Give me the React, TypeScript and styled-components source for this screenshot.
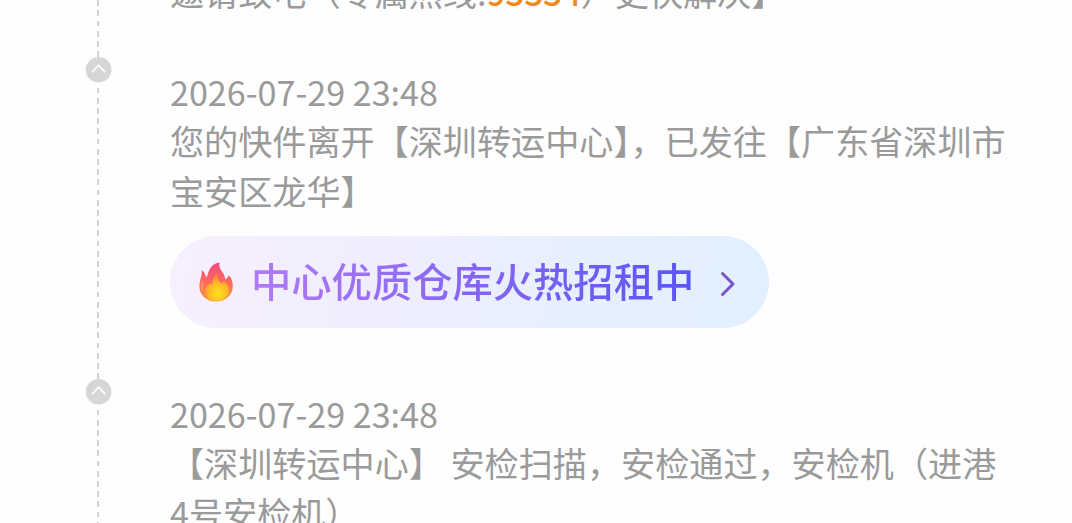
import { ReactNode } from 'react';
import styled, { createGlobalStyle } from 'styled-components';

const GlobalStyle = createGlobalStyle`
    body {
        margin: 0;
        background-color: #fefefe;
    }
`;

const Page = styled.main`
    height: 523px;
    overflow: hidden;
    font-family: "Noto Sans CJK SC", sans-serif;
    font-size: 34.12px;
    color: #9a9a9a;
`;

const Timeline = styled.ol`
    margin: -265px 0 0;
    padding: 0 60px 0 85px;
    list-style: none;
`;

type ItemProps = {
    $alignEnd?: boolean;
};

const Item = styled.li<ItemProps>`
    display: flex;
    gap: 58px;
    height: 322px;

    > :last-child {
        align-self: ${({ $alignEnd }) => $alignEnd ? "flex-end" : "flex-start"};
    }
`;

const Rail = styled.div`
    flex: none;
    width: 27px;
    background: repeating-linear-gradient(to top, #d2d2d2 0 5.7px, transparent 5.7px 10.2px) 12px 100% / 2px 292px no-repeat;
`;

const Marker = styled.svg`
    display: block;
    width: 27px;
    height: 27px;
`;

const Body = styled.div`
    flex: 1;
    min-width: 0;
    padding: 10px 0 41px;
`;

const Time = styled.div`
    height: 48px;
    line-height: 49px;
`;

const Message = styled.p`
    margin: 0;
    line-height: 50px;
`;

const Hotline = styled.span`
    color: #f08a1d;
    font-weight: 500;
    letter-spacing: -0.6px;
`;

const Banner = styled.a`
    display: flex;
    align-items: center;
    box-sizing: border-box;
    width: 599px;
    height: 92px;
    margin-top: 21px;
    padding: 0 33px 0 28px;
    border-radius: 46px;
    background: linear-gradient(100deg, #f8effe 0%, #eeeefe 40%, #e6f0fe 70%, #e1effe 100%);
`;

const Fire = styled.svg`
    width: 36px;
    height: 40px;
`;

const BannerText = styled.span`
    margin-left: 17px;
    padding-bottom: 5px;
    font-size: 40.3px;
    font-weight: 500;
    line-height: 60px;
    white-space: nowrap;
    background: linear-gradient(90deg, #b07af8 0%, #8566f2 50%, #5a55f6 100%);
    background-clip: text;
    color: transparent;
`;

const Arrow = styled.svg`
    width: 16px;
    height: 26px;
    margin: 3px 0 0 auto;
`;

const MarkerIcon = () => (
    <Marker viewBox="0 0 27 27">
        <circle cx="13.6" cy="12.8" r="12.8" fill="#d6d6d6" />
        <path d="M7.1 15.2 13.5 8.2l6.6 7" fill="none" stroke="#fff" strokeWidth="1.7" />
    </Marker>
);

const FireIcon = () => (
    <Fire viewBox="0 0 36 40">
        <defs>
            <linearGradient id="flame" x1="0" y1="0" x2="0" y2="1">
                <stop offset="0" stopColor="#f54a80" />
                <stop offset="0.5" stopColor="#fa6a5c" />
                <stop offset="1" stopColor="#ff9a38" />
            </linearGradient>
            <radialGradient id="core" cx="0.55" cy="0.75" r="0.65">
                <stop offset="0" stopColor="#ffe024" />
                <stop offset="0.6" stopColor="#ffba24" />
                <stop offset="1" stopColor="#fd8440" />
            </radialGradient>
        </defs>
        <path
            d="M21.5.6C20.9 4 21.8 6.7 23.7 9.2c1.7 2.2 3.3 4.5 3.6 8.2 1.6-.8 2.800-2.100 3.600-4.100 2.900 3.200 4 7 3.900 11.200C34.600 33.300 27.600 39.500 18 39.500S1.600 33.100 1.400 24.700C1.300 18.700 4 14.700 3.900 8.300c2.600 2 3.900 4.500 4.200 7.500 1.700-2.200 1.900-5.100 3.400-8.200C13.600 3.500 16.900 1.200 21.500.6Z"
            fill="url(#flame)"
        />
        <path
            d="M19 10.800c-.3 5.600 2.100 8.600 4.800 11 .9-.6 1.500-1.500 1.900-2.800 3.300 2.600 5.600 5.700 5.500 9.500-.2 6.300-5.700 10.400-12.700 10.400S6.800 34.800 6.900 28.800c.1-3.500 2.400-6.300 5.400-7.500.9.500 1.500 1.300 1.700 2.200C14.200 18.700 15.900 14 19 10.800Z"
            fill="url(#core)"
        />
        <path d="M4.800 19.500c-1.200 2.800-1.200 5.600-.3 8" fill="none" stroke="#fff" strokeOpacity="0.35" strokeLinecap="round" />
    </Fire>
);

const ArrowIcon = () => (
    <Arrow viewBox="0 0 16 26">
        <path
            d="M2.5 2.5 13 13 2.5 23.5"
            fill="none"
            stroke="#7a55c4"
            strokeWidth="3"
            strokeLinecap="round"
            strokeLinejoin="round"
        />
    </Arrow>
);

type TrackItemProps = {
    time?: string;
    alignEnd?: boolean;
    children: ReactNode;
};

const TrackItem = ({ time, alignEnd, children }: TrackItemProps) => (
    <Item $alignEnd={alignEnd}>
        <Rail>
            <MarkerIcon />
        </Rail>
        <Body>
            {time && <Time>{time}</Time>}
            {children}
        </Body>
    </Item>
);

const App = () => {
    return (
        <Page lang="zh-CN">
            <GlobalStyle />
            <Timeline>
                <TrackItem alignEnd>
                    <Message>
                        邀请致电（专属热线:<Hotline>95554</Hotline>）更快解决】
                    </Message>
                </TrackItem>
                <TrackItem time="2026-07-29 23:48">
                    <Message>您的快件离开【深圳转运中心】，已发往【广东省深圳市宝安区龙华】</Message>
                    <Banner>
                        <FireIcon />
                        <BannerText>中心优质仓库火热招租中</BannerText>
                        <ArrowIcon />
                    </Banner>
                </TrackItem>
                <TrackItem time="2026-07-29 23:48">
                    <Message>【深圳转运中心】 安检扫描，安检通过，安检机（进港4号安检机）</Message>
                </TrackItem>
            </Timeline>
        </Page>
    );
};

export default App;
